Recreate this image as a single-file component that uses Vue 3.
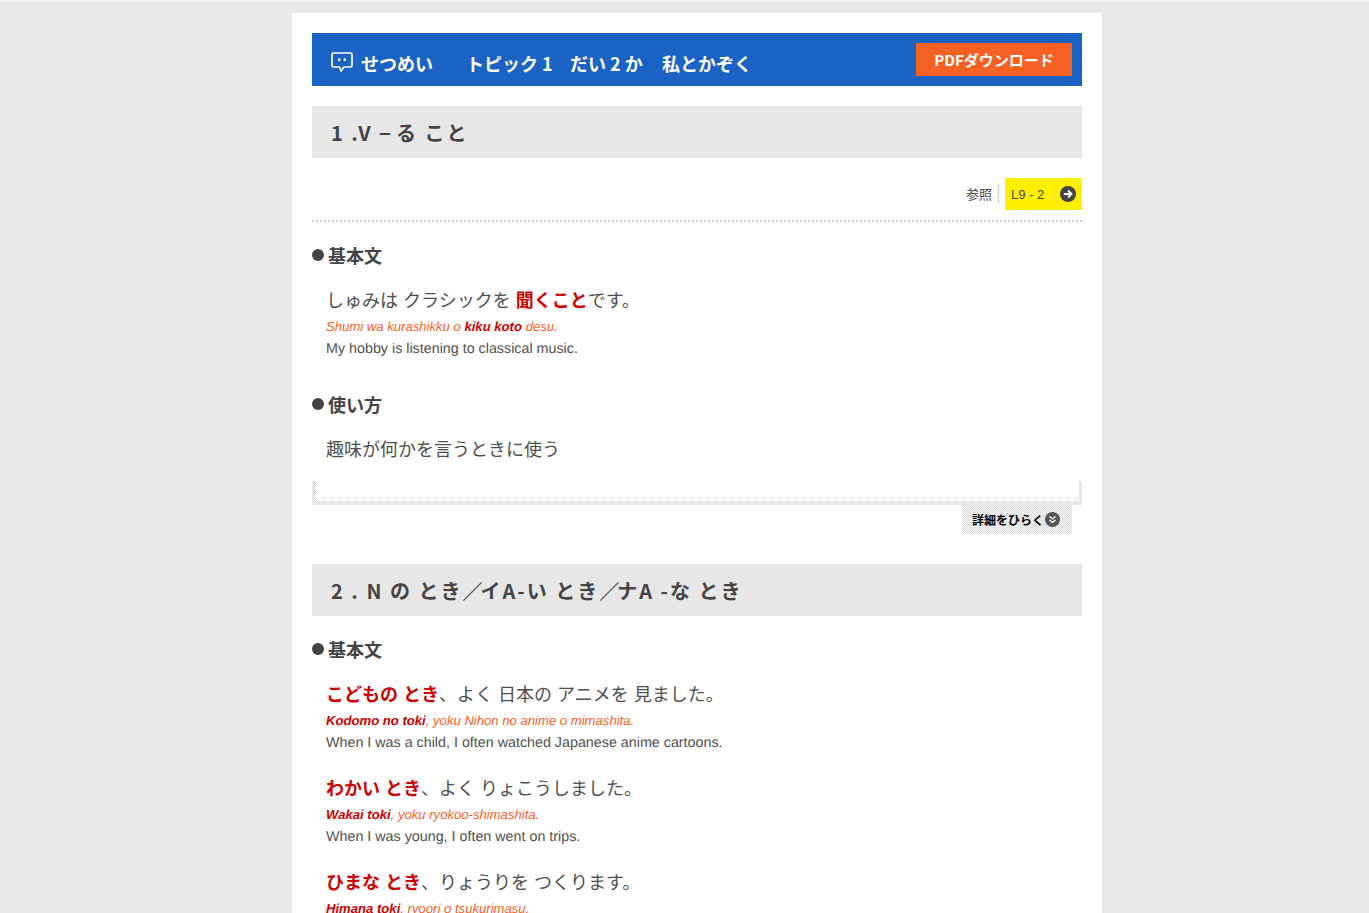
<script setup>
const ex2 = [
  { jp: 'こどもの とき', rest: '、よく 日本の アニメを 見ました。', ro: 'Kodomo no toki', roRest: ', yoku Nihon no anime o mimashita.', en: 'When I was a child, I often watched Japanese anime cartoons.' },
  { jp: 'わかい とき', rest: '、よく りょこうしました。', ro: 'Wakai toki', roRest: ', yoku ryokoo-shimashita.', en: 'When I was young, I often went on trips.' },
  { jp: 'ひまな とき', rest: '、りょうりを つくります。', ro: 'Himana toki', roRest: ', ryoori o tsukurimasu.', en: '' }
]
</script>

<template>
  <div class="viewport">
    <div class="topline"></div>
    <main class="page">
      <header class="bar">
        <svg class="bubble" width="22" height="21" viewBox="0 0 22 21" fill="none" stroke="#fff" stroke-width="1.700" stroke-linejoin="round">
          <path d="M2.500 1h17A1.500 1.500 0 0 1 21 2.500v11a1.500 1.500 0 0 1-1.500 1.500H13l-3 4-1.500-4h-6A1.500 1.500 0 0 1 1 13.500v-11A1.500 1.500 0 0 1 2.500 1z" />
          <rect x="7" y="6.500" width="2.400" height="2.400" fill="#fff" stroke="none" />
          <rect x="12.600" y="6.500" width="2.400" height="2.400" fill="#fff" stroke="none" />
        </svg>
        <span class="bar-a">せつめい</span>
        <span class="bar-b">トピック 1</span>
        <span class="bar-c">だい 2 か</span>
        <span class="bar-d">私とかぞく</span>
        <a class="pdf">PDFダウンロード</a>
      </header>

      <h2 class="sec">1 .V <span class="dash">−</span>る こと</h2>
      <div class="ref">
        <span class="ref-label">参照</span>
        <a class="ref-link">
          <span>L9 - 2</span>
          <svg width="16" height="16" viewBox="0 0 16 16">
            <circle cx="8" cy="8" r="8" fill="#444" />
            <path d="M3.800 8h7.800M8 4.500 11.600 8 8 11.500" fill="none" stroke="#fff" stroke-width="1.800" />
          </svg>
        </a>
      </div>

      <h3 class="sub first">基本文</h3>
      <div class="ex one">
        <p class="jp">しゅみは クラシックを <b>聞くこと</b>です。</p>
        <p class="ro">Shumi wa kurashikku o <b>kiku koto</b> desu.</p>
        <p class="en">My hobby is listening to classical music.</p>
      </div>

      <h3 class="sub use">使い方</h3>
      <p class="jp usage">趣味が何かを言うときに使う</p>

      <div class="frame"><div class="frame-inner"></div></div>
      <div class="more-row">
        <a class="more">
          <span>詳細をひらく</span>
          <svg width="15" height="15" viewBox="0 0 15 15">
            <circle cx="7.500" cy="7.500" r="7.500" fill="#555" />
            <path d="M4.500 4.500 7.500 7 10.500 4.500M4.500 8 7.500 10.500 10.500 8" fill="none" stroke="#fff" stroke-width="1.300" />
          </svg>
        </a>
      </div>

      <h2 class="sec two">2 . N の とき<span class="sl">／</span>イA-い とき<span class="sl">／</span>ナA -な とき</h2>
      <h3 class="sub second">基本文</h3>
      <div v-for="e in ex2" :key="e.ro" class="ex many">
        <p class="jp"><b>{{ e.jp }}</b>{{ e.rest }}</p>
        <p class="ro"><b>{{ e.ro }}</b>{{ e.roRest }}</p>
        <p v-if="e.en" class="en">{{ e.en }}</p>
      </div>
    </main>
  </div>
</template>

<style>
html, body { margin: 0; background: #e8e8e8; }
</style>

<style scoped>
.viewport {
  height: 913px;
  overflow: hidden;
  background: #e8e8e8;
  font-family: "Liberation Sans", "Noto Sans CJK JP", sans-serif;
  color: #444;
}
.topline { height: 3px; background: #f2f2f2; border-bottom: 1px solid #e4e4f4; box-sizing: border-box; }
.page {
  width: 770px;
  margin: 10px 0 0 292px;
  padding: 20px;
  background: #fff;
}
p, h2, h3 { margin: 0; }
.bar {
  display: flex;
  align-items: flex-start;
  height: 53px;
  padding: 0 10px 0 19px;
  box-sizing: border-box;
  background: #1a62c4;
  color: #fff;
  font-family: "Noto Sans CJK JP", sans-serif;
  font-size: 18px;
  font-weight: 700;
  line-height: 26px;
}
.bubble { margin-top: 19px; margin-right: 8px; flex: none; }
.bar-a, .bar-b, .bar-c, .bar-d { margin-top: 17px; }
.bar-a { width: 105px; }
.bar-b { width: 104px; }
.bar-c { width: 92px; }
.pdf {
  margin-left: auto;
  margin-top: 10px;
  width: 156px;
  height: 33px;
  line-height: 33px;
  text-align: center;
  background: #f56023;
  font-size: 15px;
}
.sec {
  margin-top: 20px;
  height: 52px;
  padding-left: 19px;
  background: #e7e7e7;
  font-family: "Noto Sans CJK JP", sans-serif;
  font-size: 20px;
  line-height: 53px;
  font-weight: 700;
  letter-spacing: 2px;
  color: #444;
}
.sec.two { margin-top: 30px; }
.dash { margin-right: 3px; }
.sl { letter-spacing: -2px; }
.ref {
  display: flex;
  justify-content: flex-end;
  align-items: center;
  margin-top: 20px;
  padding-bottom: 10px;
  border-bottom: 2px dotted #ccc;
  font-size: 13px;
}
.ref-label {
  height: 18px;
  line-height: 19px;
  padding-right: 6px;
  border-right: 1px dotted #aaa;
  margin-right: 6px;
}
.ref-link {
  display: flex;
  justify-content: space-between;
  align-items: center;
  box-sizing: border-box;
  width: 77px;
  height: 32px;
  padding: 0 6px;
  background: #fff000;
}
.sub {
  position: relative;
  padding-left: 16px;
  font-size: 18px;
  line-height: 26px;
  font-weight: 700;
  color: #444;
}
.sub::before {
  content: "";
  position: absolute;
  left: 0;
  top: 5px;
  width: 12px;
  height: 12px;
  border-radius: 50%;
  background: #444;
}
.sub.first { margin-top: 22px; }
.sub.use { margin-top: 33px; }
.sub.second { margin-top: 22px; }
.jp { font-size: 18px; line-height: 26px; padding-left: 14px; color: #4f4f4f; }
.jp b { color: #d00000; }
.ro {
  margin-top: 2px;
  padding-left: 14px;
  font-size: 13.120px;
  line-height: 22px;
  font-style: italic;
  color: #f56023;
  text-rendering: geometricPrecision;
}
.ro b { color: #d00000; }
.en {
  padding-left: 14px;
  font-size: 14.300px;
  line-height: 22px;
  color: #4f4f4f;
  text-rendering: geometricPrecision;
}
.ex.one { margin-top: 18px; }
.ex.many { margin-top: 18px; }
.ex.many + .ex.many { margin-top: 22px; }
.usage { margin-top: 18px; }
.frame {
  margin-top: 18px;
  height: 24px;
  box-sizing: border-box;
  padding: 0 3px 4px 4px;
  background: repeating-conic-gradient(#d0d0d0 0 25%, #fff 0 50%) 0 0 / 2px 2px;
}
.frame-inner { height: 100%; background: #fff; }
.more-row { display: flex; justify-content: flex-end; padding-right: 10px; }
.more {
  display: flex;
  align-items: center;
  gap: 1px;
  box-sizing: border-box;
  width: 110px;
  height: 29px;
  padding-left: 10px;
  background: repeating-conic-gradient(#dcdcdc 0 25%, #f6f6f6 0 50%) 0 0 / 2px 2px;
  color: #000;
  font-family: "Noto Sans CJK JP", sans-serif;
  font-size: 12px;
  font-weight: 700;
}
</style>
